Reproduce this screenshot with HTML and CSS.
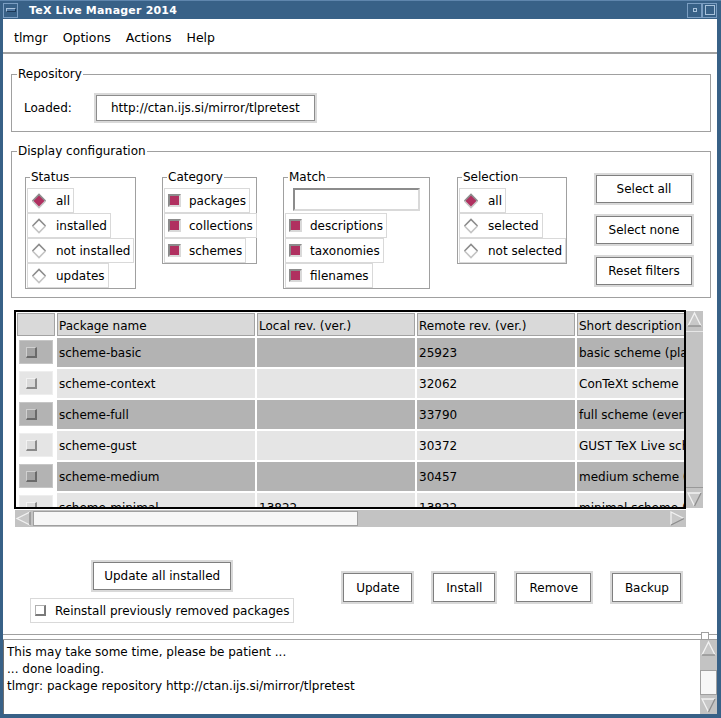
FILE: index.html
```html
<!DOCTYPE html>
<html>
<head>
<meta charset="utf-8">
<title>TeX Live Manager 2014</title>
<link rel="stylesheet" href="styles.css">
</head>
<body>
<div class="win">
  <div class="titlebar">
    <div class="tb-btn menu-btn"><span class="bar"></span></div>
    <div class="title">TeX Live Manager 2014</div>
    <div class="tb-btn min-btn"><span class="dot"></span></div>
    <div class="tb-btn max-btn"><span class="sq"></span></div>
  </div>
  <div class="client">
    <div class="menubar">
      <span>tlmgr</span><span>Options</span><span>Actions</span><span>Help</span>
    </div>

    <fieldset class="frame repo">
      <legend>Repository</legend>
      <div class="repo-row">
        <span class="loaded">Loaded:</span>
        <div class="urlbox">http://ctan.ijs.si/mirror/tlpretest</div>
      </div>
    </fieldset>

    <fieldset class="frame display">
      <legend>Display configuration</legend>
      <div class="drow">
        <fieldset class="sub status">
          <legend>Status</legend>
          <div class="items">
            <div class="item"><svg class="radio" viewBox="0 0 16 16"><polygon points="8,1.5 14.5,8 8,14.5 1.5,8" class="r-on"/><polyline points="1.5,8 8,1.5 14.5,8" class="r-tl"/><polyline points="1.5,8 8,14.5 14.5,8" class="r-br"/></svg>all</div>
            <div class="item"><svg class="radio" viewBox="0 0 16 16"><polygon points="8,1.5 14.5,8 8,14.5 1.5,8" class="r-off"/><polyline points="1.5,8 8,1.5 14.5,8" class="r-tl"/><polyline points="1.5,8 8,14.5 14.5,8" class="r-br"/></svg>installed</div>
            <div class="item"><svg class="radio" viewBox="0 0 16 16"><polygon points="8,1.5 14.5,8 8,14.5 1.5,8" class="r-off"/><polyline points="1.5,8 8,1.5 14.5,8" class="r-tl"/><polyline points="1.5,8 8,14.5 14.5,8" class="r-br"/></svg>not installed</div>
            <div class="item"><svg class="radio" viewBox="0 0 16 16"><polygon points="8,1.5 14.5,8 8,14.5 1.5,8" class="r-off"/><polyline points="1.5,8 8,1.5 14.5,8" class="r-tl"/><polyline points="1.5,8 8,14.5 14.5,8" class="r-br"/></svg>updates</div>
          </div>
        </fieldset>

        <fieldset class="sub category">
          <legend>Category</legend>
          <div class="items">
            <div class="item"><span class="check on"></span>packages</div>
            <div class="item"><span class="check on"></span>collections</div>
            <div class="item"><span class="check on"></span>schemes</div>
          </div>
        </fieldset>

        <fieldset class="sub match">
          <legend>Match</legend>
          <div class="items">
            <div class="entry"></div>
            <div class="item"><span class="check on"></span>descriptions</div>
            <div class="item"><span class="check on"></span>taxonomies</div>
            <div class="item"><span class="check on"></span>filenames</div>
          </div>
        </fieldset>

        <fieldset class="sub selection">
          <legend>Selection</legend>
          <div class="items">
            <div class="item"><svg class="radio" viewBox="0 0 16 16"><polygon points="8,1.5 14.5,8 8,14.5 1.5,8" class="r-on"/><polyline points="1.5,8 8,1.5 14.5,8" class="r-tl"/><polyline points="1.5,8 8,14.5 14.5,8" class="r-br"/></svg>all</div>
            <div class="item"><svg class="radio" viewBox="0 0 16 16"><polygon points="8,1.5 14.5,8 8,14.5 1.5,8" class="r-off"/><polyline points="1.5,8 8,1.5 14.5,8" class="r-tl"/><polyline points="1.5,8 8,14.5 14.5,8" class="r-br"/></svg>selected</div>
            <div class="item"><svg class="radio" viewBox="0 0 16 16"><polygon points="8,1.5 14.5,8 8,14.5 1.5,8" class="r-off"/><polyline points="1.5,8 8,1.5 14.5,8" class="r-tl"/><polyline points="1.5,8 8,14.5 14.5,8" class="r-br"/></svg>not selected</div>
          </div>
        </fieldset>

        <div class="btncol">
          <div class="btn">Select all</div>
          <div class="btn">Select none</div>
          <div class="btn">Reset filters</div>
        </div>
      </div>
    </fieldset>

    <div class="tarea">
      <div class="trow">
        <div class="table">
          <div class="grid">
            <div class="hd"></div>
            <div class="hd">Package name</div>
            <div class="hd">Local rev. (ver.)</div>
            <div class="hd">Remote rev. (ver.)</div>
            <div class="hd">Short description</div>

            <div class="ck-cell"><div class="ck-inner dark"><span class="tck dk"></span></div></div>
            <div class="cell dark">scheme-basic</div>
            <div class="cell dark"></div>
            <div class="cell dark">25923</div>
            <div class="cell dark">basic scheme (plain and latex)</div>

            <div class="ck-cell"><div class="ck-inner light"><span class="tck lt"></span></div></div>
            <div class="cell light">scheme-context</div>
            <div class="cell light"></div>
            <div class="cell light">32062</div>
            <div class="cell light">ConTeXt scheme</div>

            <div class="ck-cell"><div class="ck-inner dark"><span class="tck dk"></span></div></div>
            <div class="cell dark">scheme-full</div>
            <div class="cell dark"></div>
            <div class="cell dark">33790</div>
            <div class="cell dark">full scheme (everything)</div>

            <div class="ck-cell"><div class="ck-inner light"><span class="tck lt"></span></div></div>
            <div class="cell light">scheme-gust</div>
            <div class="cell light"></div>
            <div class="cell light">30372</div>
            <div class="cell light">GUST TeX Live scheme</div>

            <div class="ck-cell"><div class="ck-inner dark"><span class="tck dk"></span></div></div>
            <div class="cell dark">scheme-medium</div>
            <div class="cell dark"></div>
            <div class="cell dark">30457</div>
            <div class="cell dark">medium scheme (small + more packages and languages)</div>

            <div class="ck-cell"><div class="ck-inner light"><span class="tck lt"></span></div></div>
            <div class="cell light">scheme-minimal</div>
            <div class="cell light">13822</div>
            <div class="cell light">13822</div>
            <div class="cell light">minimal scheme (plain only)</div>
          </div>
        </div>
        <div class="vscroll">
          <svg class="arr" viewBox="0 0 16 17"><polygon points="8,2 14.5,15 1.5,15" class="a-fill"/><polyline points="1.5,15 8,2 14.5,15" class="a-hi"/><line x1="1.5" y1="15" x2="14.5" y2="15" class="a-lo"/></svg>
          <div class="vthumb"></div>
          <svg class="arr" viewBox="0 0 16 17"><polygon points="1.5,2 14.5,2 8,15" class="a-fill"/><polyline points="14.5,2 1.5,2 8,15" class="a-hi"/><line x1="14.5" y1="2" x2="8" y2="15" class="a-lo"/></svg>
        </div>
      </div>
      <div class="hscroll">
        <svg class="harr" viewBox="0 0 17 16"><polygon points="2,8 15,1.5 15,14.5" class="a-fill"/><polyline points="15,1.5 2,8 15,14.5" class="a-hi"/><line x1="15" y1="1.5" x2="15" y2="14.5" class="a-lo"/></svg>
        <div class="hthumb"></div>
        <div class="hspace"></div>
        <svg class="harr" viewBox="0 0 17 16"><polygon points="2,1.5 15,8 2,14.5" class="a-fill"/><polyline points="2,14.5 2,1.5 15,8" class="a-hi"/><line x1="15" y1="8" x2="2" y2="14.5" class="a-lo"/></svg>
      </div>
    </div>

    <div class="actions">
      <div class="left-act">
        <div class="btn upd-all">Update all installed</div>
        <div class="reinstall"><span class="rck"></span>Reinstall previously removed packages</div>
      </div>
      <div class="right-act">
        <div class="btn b-update">Update</div>
        <div class="btn b-install">Install</div>
        <div class="btn b-remove">Remove</div>
        <div class="btn b-backup">Backup</div>
      </div>
    </div>

    <div class="sash"><span class="handle"></span></div>

    <div class="log">
      <div class="logtext">
        <div>This may take some time, please be patient ...</div>
        <div>... done loading.</div>
        <div>tlmgr: package repository http://ctan.ijs.si/mirror/tlpretest</div>
      </div>
      <div class="lscroll">
        <svg class="arr" viewBox="0 0 16 17"><polygon points="8,2 14.5,15 1.5,15" class="a-fill"/><polyline points="1.5,15 8,2 14.5,15" class="a-hi"/><line x1="1.5" y1="15" x2="14.5" y2="15" class="a-lo"/></svg>
        <div class="ltrack1"></div>
        <div class="lthumb"></div>
        <div class="ltrack2"></div>
        <svg class="arr" viewBox="0 0 16 17"><polygon points="1.5,2 14.5,2 8,15" class="a-fill"/><polyline points="14.5,2 1.5,2 8,15" class="a-hi"/><line x1="14.5" y1="2" x2="8" y2="15" class="a-lo"/></svg>
      </div>
    </div>
  </div>
</div>
</body>
</html>
```
FILE: styles.css
```css
* { box-sizing: border-box; }
html, body { margin: 0; padding: 0; }
body {
  width: 721px;
  height: 718px;
  overflow: hidden;
  font-family: "DejaVu Sans", sans-serif;
  font-size: 12px;
  color: #000;
}

.win {
  width: 721px;
  height: 718px;
  background: #386187;
  display: flex;
  flex-direction: column;
  padding: 0 4px 4px 3px;
  border-top: 1px solid #5f86ad;
}

/* title bar */
.titlebar {
  height: 18px;
  display: flex;
  align-items: center;
  color: #fff;
}
.tb-btn {
  height: 15px;
  border: 1px solid #7b9ec2;
  display: flex;
  align-items: center;
  justify-content: center;
}
.menu-btn { width: 15px; }
.menu-btn .bar {
  width: 10px;
  height: 4px;
  background: #4f77a0;
  border: 1px solid;
  border-color: #a9c3dc #1c3957 #1c3957 #a9c3dc;
}
.title {
  flex: 1;
  padding-left: 11px;
  font-weight: bold;
  font-size: 11px;
  letter-spacing: 0.2px;
}
.min-btn { width: 15px; }
.min-btn .dot {
  width: 4px;
  height: 4px;
  border: 1px solid #a9c3dc;
}
.max-btn { width: 15px; }
.max-btn .sq {
  width: 10px;
  height: 10px;
  border: 1px solid #a9c3dc;
}

/* client */
.client {
  flex: 1;
  min-height: 0;
  background: #fff;
  display: flex;
  flex-direction: column;
}

.menubar {
  height: 35px;
  flex: none;
  border-bottom: 2px solid #a3a3a3;
  display: flex;
  align-items: center;
  gap: 15px;
  padding: 3px 0 0 11px;
  font-size: 12.5px;
}

/* frames */
fieldset { margin: 0; padding: 0; min-width: 0; }
.frame {
  flex: none;
  border: 1px solid #a0a0a0;
  margin: 13px 6px 0 8px;
}
legend {
  margin-left: 5px;
  padding: 0 1px;
  line-height: 15px;
  font-size: 12px;
}

.repo-row {
  display: flex;
  align-items: center;
  padding: 11px 0 8px 12px;
}
.loaded { margin-right: 22px; }
.urlbox {
  width: 223px;
  height: 30px;
  border: 2px solid #d9d9d9;
  box-shadow: inset 0 0 0 1px #8c8c8c;
  display: flex;
  align-items: center;
  justify-content: center;
}

.display { margin-top: 12px; }
.drow {
  display: flex;
  align-items: flex-start;
  padding: 11px 0 8px 13px;
}
.sub {
  border: 1px solid #a0a0a0;
}
.sub legend { margin-left: 4px; }
.items {
  display: flex;
  flex-direction: column;
  align-items: flex-start;
  padding: 3px 1px 0;
}
.status { width: 111px; }
.category { width: 95px; margin-left: 26px; }
.match { width: 147px; margin-left: 26px; }
.selection { width: 110px; margin-left: 27px; }

.item {
  height: 25px;
  border: 1px solid #d9d9d9;
  display: flex;
  align-items: center;
  padding: 0 3px 0 3px;
  white-space: nowrap;
}
.radio {
  width: 16px;
  height: 16px;
  margin-right: 9px;
  flex: none;
}
.r-on { fill: #b03060; stroke: none; }
.r-off { fill: #fff; stroke: none; }
.r-tl { fill: none; stroke: #8c8c8c; stroke-width: 1.6; }
.r-br { fill: none; stroke: #c4c4c4; stroke-width: 1.6; }

.check {
  width: 13px;
  height: 13px;
  margin-right: 8px;
  flex: none;
  border: 2px solid;
  border-color: #8c8c8c #d9d9d9 #d9d9d9 #8c8c8c;
}
.check.on { background: #b03060; }

.entry {
  align-self: center;
  width: 127px;
  height: 23px;
  margin-bottom: 2px;
  border: 2px solid;
  border-color: #8c8c8c #d9d9d9 #d9d9d9 #8c8c8c;
  background: #fff;
}

.btncol {
  width: 100px;
  margin-left: 27px;
  margin-top: 3px;
  display: flex;
  flex-direction: column;
  gap: 9px;
}
.btn {
  height: 32px;
  border: 2px solid #d9d9d9;
  box-shadow: inset 0 0 0 1px #7f7f7f;
  background: #fff;
  display: flex;
  align-items: center;
  justify-content: center;
  white-space: nowrap;
}

/* table */
.tarea {
  flex: none;
  margin: 12px 0 0 11px;
}
.trow { display: flex; }
.table {
  width: 672px;
  height: 199px;
  border: 2px solid #000;
  overflow: hidden;
  background: #fff;
  padding: 1px 0 0 1px;
}
.grid {
  display: grid;
  grid-template-columns: 38px 198px 158px 158px 300px;
  grid-template-rows: 23px;
  grid-auto-rows: 29px;
  gap: 2px;
}
.hd {
  background: #d9d9d9;
  border: 1px solid #a3a3a3;
  padding: 2px 0 0 1px;
  display: flex;
  align-items: center;
  white-space: nowrap;
  overflow: hidden;
}
.cell {
  display: flex;
  align-items: center;
  padding-left: 2px;
  white-space: nowrap;
  overflow: hidden;
}
.dark { background: #b3b3b3; }
.light { background: #e5e5e5; }
.ck-cell {
  background: #fff;
  padding: 2px 2px 3px;
}
.ck-inner {
  height: 100%;
  display: flex;
  align-items: center;
  padding-left: 6px;
}
.ck-inner.dark { border: 1px solid #c6c6c6; }
.ck-inner.light { border: 1px solid #eeeeee; }
.tck {
  width: 11px;
  height: 11px;
  border-style: solid;
  border-width: 1px 2px 2px 1px;
}
.tck.dk { background: #a3a3a3; border-color: #d0d0d0 #6a6a6a #6a6a6a #d0d0d0; }
.tck.lt { background: #d9d9d9; border-color: #f2f2f2 #8a8a8a #8a8a8a #f2f2f2; }

.vscroll {
  width: 17px;
  height: 197px;
  margin-top: 1px;
  background: #c3c3c3;
  display: flex;
  flex-direction: column;
}
.arr { width: 17px; height: 17px; flex: none; display: block; }
.harr { width: 17px; height: 17px; flex: none; display: block; }
.a-fill { fill: #c8c8c8; }
.a-hi { fill: none; stroke: #f2f2f2; stroke-width: 1.3; }
.a-lo { stroke: #8c8c8c; stroke-width: 1.3; }
.vthumb {
  flex: 1;
  border-top: 1px solid #e6e6e6;
  border-bottom: 1px solid #999;
  margin: 3px 0;
}
.hscroll {
  margin: 1px 0 0 1px;
  width: 671px;
  height: 17px;
  background: #c3c3c3;
  display: flex;
  align-items: center;
}
.hthumb {
  width: 325px;
  height: 15px;
  margin-left: 1px;
  background: #f7f7f7;
  border: 1px solid #a0a0a0;
}
.hspace { flex: 1; }

/* action buttons */
.actions {
  flex: none;
  height: 105px;
  display: flex;
  align-items: flex-start;
  padding: 33px 0 0 27px;
}
.left-act {
  display: flex;
  flex-direction: column;
  align-items: center;
  gap: 6px;
}
.upd-all { width: 142px; }
.reinstall {
  height: 25px;
  border: 1px solid #d9d9d9;
  display: flex;
  align-items: center;
  padding: 0 4px 0 4px;
  white-space: nowrap;
}
.rck {
  width: 11px;
  height: 11px;
  margin-right: 9px;
  background: #fff;
  border-style: solid;
  border-width: 1px 2px 2px 1px;
  border-color: #b0b0b0 #7a7a7a #7a7a7a #b0b0b0;
}
.right-act {
  display: flex;
  gap: 17px;
  margin: 11px 0 0 47px;
}
.right-act .btn { height: 33px; }
.b-update { width: 73px; }
.b-install { width: 66px; }
.b-remove { width: 79px; }
.b-backup { width: 73px; }

/* sash */
.sash {
  flex: none;
  height: 7px;
  position: relative;
  border-top: 2px solid #fff;
}
.sash::before {
  content: "";
  display: block;
  height: 1px;
  background: #a0a0a0;
}
.handle {
  position: absolute;
  right: 8px;
  top: -2px;
  width: 8px;
  height: 8px;
  background: #fff;
  border: 1px solid #a0a0a0;
}

/* log */
.log {
  flex: 1;
  min-height: 0;
  display: flex;
  border-top: 1px solid #a0a0a0;
}
.logtext {
  flex: 1;
  border-left: 1px solid #707070;
  padding: 4px 0 0 3px;
  line-height: 17px;
  white-space: nowrap;
}
.lscroll {
  width: 17px;
  margin-left: 2px;
  background: #c3c3c3;
  display: flex;
  flex-direction: column;
}
.ltrack1 { height: 13px; flex: none; }
.lthumb { height: 25px; flex: none; background: #f7f7f7; border: 1px solid #a0a0a0; }
.ltrack2 { flex: 1; }
```
